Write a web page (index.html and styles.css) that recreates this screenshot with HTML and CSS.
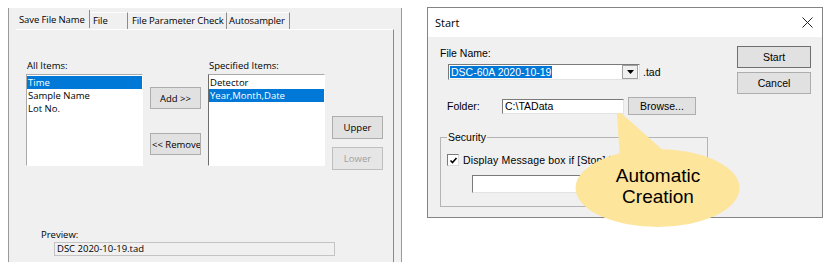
FILE: index.html
```html
<!DOCTYPE html>
<html lang="en">
<head>
    <meta charset="UTF-8">
    <title>Save File Name / Start</title>
    <link rel="stylesheet" href="styles.css">
</head>
<body>
<div class="shot">

    <section class="opts">
        <div class="tabs">
            <span class="tab tab-save on">Save File Name</span>
            <span class="tab tab-file">File</span>
            <span class="tab tab-param">File Parameter Check</span>
            <span class="tab tab-auto">Autosampler</span>
        </div>
        <div class="page">
            <div class="pick">
                <div class="col">
                    <div class="lbl">All Items:</div>
                    <ul class="list">
                        <li class="sel">Time</li>
                        <li>Sample Name</li>
                        <li>Lot No.</li>
                    </ul>
                </div>
                <div class="move">
                    <button class="btn btn-add">Add &gt;&gt;</button>
                    <button class="btn btn-remove">&lt;&lt; Remove</button>
                </div>
                <div class="col">
                    <div class="lbl">Specified Items:</div>
                    <ul class="list spec">
                        <li>Detector</li>
                        <li class="sel">Year,Month,Date</li>
                    </ul>
                </div>
                <div class="order">
                    <button class="btn">Upper</button>
                    <button class="btn" disabled>Lower</button>
                </div>
            </div>
            <div class="preview">
                <div class="lbl">Preview:</div>
                <div class="pv-box">DSC 2020-10-19.tad</div>
            </div>
        </div>
    </section>

    <section class="dlg">
        <div class="dlg-title">
            <span>Start</span>
            <svg class="close" width="11" height="11" viewBox="0 0 11 11"><path d="M0.5 0.5L10.5 10.5M10.5 0.5L0.5 10.5" stroke="#222" stroke-width="1" fill="none"/></svg>
        </div>
        <div class="dlg-body">
            <div class="dlg-main">
                <div class="d-lbl">File Name:</div>
                <div class="combo-row">
                    <div class="combo">
                        <span class="combo-text">DSC-60A 2020-10-19</span>
                        <span class="combo-btn">
                            <svg width="7" height="4" viewBox="0 0 7 4"><path d="M0 0H7L3.5 4Z" fill="#000"/></svg>
                        </span>
                    </div>
                    <span class="ext">.tad</span>
                </div>
                <div class="folder-row">
                    <span class="d-lbl folder-lbl">Folder:</span>
                    <div class="field folder">C:\TAData</div>
                    <button class="dbtn browse">Browse...</button>
                </div>
                <fieldset class="grp">
                    <legend>Security</legend>
                    <label class="chk">
                        <span class="box">
                            <svg width="9" height="9" viewBox="0 0 9 9"><path d="M1.5 4.5L3.5 6.5L7.5 2" stroke="#000" stroke-width="1.6" fill="none"/></svg>
                        </span>
                        Display Message box if [Stop] is pressed
                    </label>
                    <div class="field pass"></div>
                </fieldset>
            </div>
            <div class="dlg-side">
                <button class="dbtn def">Start</button>
                <button class="dbtn">Cancel</button>
            </div>

            <div class="bubble">
                <svg width="166" height="116" viewBox="0 0 166 116">
                    <path d="M42 0L46 0L100 48L45 48Z" fill="#fee59c"/>
                    <ellipse cx="82.5" cy="75" rx="82" ry="39" fill="#fee59c"/>
                </svg>
                <div class="bubble-text">Automatic<br>Creation</div>
            </div>
        </div>
    </section>

</div>
</body>
</html>
```

FILE: styles.css
```css
* {
    margin: 0;
    padding: 0;
    box-sizing: border-box;
}

body {
    background: #fff;
    color: #000;
    font-family: "Open Sans", sans-serif;
    font-size: 9.5px;
}

.shot {
    display: flex;
    align-items: flex-start;
}

/* left: options tab page */

.opts {
    flex-shrink: 0;
    margin: 8px 0 0 8px;
    width: 394px;
    height: 254px;
    background: #f0f0f0;
    border-left: 1px solid #9a9a9a;
    border-right: 1px solid #9a9a9a;
    padding: 4px 0 0 7px;
}

.tabs {
    display: flex;
    height: 17px;
}

.tab {
    flex-shrink: 0;
    height: 17px;
    line-height: 16px;
    padding-left: 3px;
    border-right: 1px solid #8c8c8c;
    border-top: 1px solid #fdfdfd;
    white-space: nowrap;
    letter-spacing: -0.1px;
}

.tab.on {
    height: 18px;
    margin-top: -2px;
    line-height: 19px;
    border-top: none;
    position: relative;
    z-index: 1;
    background: #f0f0f0;
}

.tab-save { width: 74px; }
.tab-file { width: 38px; }
.tab-param { width: 99px; padding-left: 4px; }
.tab-auto { width: 63px; padding-left: 2px; }

.page {
    width: 378px;
    height: 233px;
    border-top: 1px solid #fff;
    border-right: 1px solid #8a8a8a;
    padding: 29px 0 0 10px;
}

.pick {
    display: flex;
    align-items: flex-start;
}

.col {
    flex: 0 0 117px;
}

.lbl {
    height: 14px;
    line-height: 14px;
    padding-left: 1px;
    white-space: nowrap;
}

.list {
    list-style: none;
    margin-top: 1px;
    width: 117px;
    height: 92px;
    background: #fff;
    border: 1px solid #a9a9a9;
    border-right-color: #fff;
    border-bottom-color: #fff;
    padding: 1px 0;
}

.list.spec {
    border-left-color: #6d6d6d;
}

.list li {
    height: 13px;
    line-height: 13px;
    padding-left: 1px;
    white-space: nowrap;
}

.list li.sel {
    background: #0078d7;
    color: #fff;
}

.btn {
    display: block;
    width: 51px;
    font: inherit;
    color: #000;
    background: #e1e1e1;
    border: 1px solid #adadad;
    white-space: nowrap;
    overflow: hidden;
}

.btn:disabled {
    color: #a0a0a0;
    background: #e6e6e6;
    border-color: #bfbfbf;
}

.move {
    flex: 0 0 51px;
    margin: 0 7px;
}

.move .btn {
    height: 22px;
}

.btn-add {
    margin-top: 28px;
}

.btn-remove {
    margin-top: 24px;
    text-align: left;
    padding-left: 1px;
}

.order {
    flex: 0 0 51px;
    margin-left: 7px;
    padding-top: 57px;
    display: flex;
    flex-direction: column;
    gap: 8px;
}

.order .btn {
    height: 23px;
}

.preview {
    margin-top: 58px;
    padding-left: 14px;
}

.pv-box {
    margin: 0 0 0 14px;
    width: 281px;
    height: 14px;
    line-height: 12px;
    padding-left: 2px;
    background: #f0f0f0;
    border: 1px solid #c4c4c4;
}

/* right: Start dialog */

.dlg {
    flex-shrink: 0;
    margin: 7px 0 0 25px;
    width: 396px;
    height: 211px;
    border: 1px solid #848484;
    background: #f0f0f0;
    font-family: "Liberation Sans", Arial, sans-serif;
    font-size: 10.5px;
}

.dlg-title {
    height: 29px;
    background: #fff;
    display: flex;
    align-items: center;
    justify-content: space-between;
    padding: 0 9px 0 7px;
    font-family: "Open Sans", sans-serif;
    font-size: 11px;
}

.dlg-body {
    position: relative;
    display: flex;
    align-items: flex-start;
    padding: 9px 11px 0 12px;
}

.dlg-main {
    flex: 1;
}

.d-lbl {
    height: 14px;
    line-height: 14px;
}

.combo-row {
    display: flex;
    align-items: center;
    margin: 4px 0 0 8px;
}

.combo {
    display: flex;
    width: 192px;
    height: 16px;
    background: #fff;
    border: 1px solid #7a7a7a;
    border-right-color: #e3e3e3;
    border-bottom-color: #e3e3e3;
    padding: 1px;
}

.combo-text {
    background: #0078d7;
    color: #fff;
    line-height: 12px;
    padding: 0 1px;
}

.combo-btn {
    margin-left: auto;
    width: 16px;
    height: 14px;
    margin-top: -1px;
    background: #f0f0f0;
    border: 1px solid #a0a0a0;
    display: flex;
    align-items: center;
    justify-content: center;
}

.ext {
    margin-left: 3px;
}

.folder-row {
    display: flex;
    align-items: center;
    margin-top: 17px;
    height: 18px;
    padding-left: 7px;
}

.folder-lbl {
    width: 55px;
}

.field {
    height: 15px;
    line-height: 13px;
    background: #fff;
    border: 1px solid #7a7a7a;
    border-right-color: #e3e3e3;
    border-bottom-color: #e3e3e3;
    padding-left: 2px;
}

.folder {
    width: 122px;
}

.dbtn {
    display: block;
    font: inherit;
    color: #000;
    background: #e1e1e1;
    border: 1px solid #adadad;
}

.browse {
    margin-left: 4px;
    width: 68px;
    height: 18px;
}

.grp {
    margin-top: 15px;
    width: 268px;
    height: 77px;
    border: 1px solid #b4b4b4;
    padding: 0 0 0 6px;
    min-width: 0;
}

.grp legend {
    padding: 0 1px;
    line-height: 14px;
}

.chk {
    display: flex;
    align-items: center;
    margin-top: 9px;
    height: 14px;
    white-space: nowrap;
    letter-spacing: 0.15px;
}

.box {
    width: 12px;
    height: 12px;
    margin-right: 4px;
    background: #fff;
    border: 1px solid #7a7a7a;
    border-right-color: #dcdcdc;
    border-bottom-color: #dcdcdc;
    display: flex;
    align-items: center;
    justify-content: center;
}

.pass {
    margin: 8px 0 0 25px;
    width: 140px;
    height: 18px;
}

.dlg-side {
    display: flex;
    flex-direction: column;
    gap: 4px;
}

.dlg-side .dbtn {
    width: 74px;
    height: 22px;
}

.dbtn.def {
    border-color: #6f6f6f;
}

.bubble {
    position: absolute;
    left: 147px;
    top: 76px;
    width: 166px;
    height: 116px;
}

.bubble svg {
    display: block;
}

.bubble-text {
    position: absolute;
    left: 0;
    top: 52px;
    width: 166px;
    text-align: center;
    font-family: "Liberation Sans", Arial, sans-serif;
    font-size: 19px;
    line-height: 21px;
}
```
